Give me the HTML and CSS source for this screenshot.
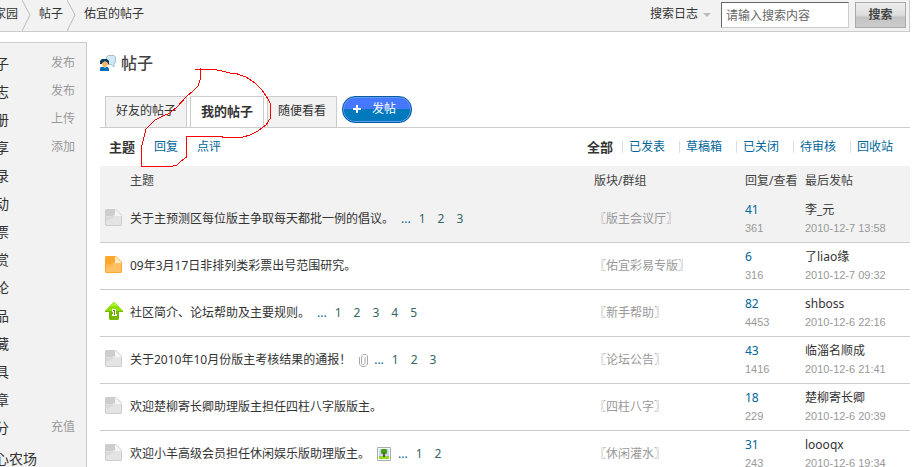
FILE: index.html
```html
<!DOCTYPE html>
<html lang="zh-CN">
<head>
  <meta charset="UTF-8">
  <meta name="viewport" content="width=device-width, initial-scale=1.0">
  <title>佑宜的帖子</title>
  <link rel="stylesheet" href="styles.css">
</head>
<body>

<svg class="defs" width="0" height="0" aria-hidden="true">
  <symbol id="arrow" viewBox="0 0 10 31">
    <path d="M0 0 L8 15 L0 31" fill="none" stroke="#bbb"/>
  </symbol>
  <symbol id="folder" viewBox="0 0 17 17">
    <path d="M1 0H11L17 6V16L16 17H1L0 16V1Z" fill="#cdcdcd"/>
    <path d="M1 7H7L9 6H16V16H1Z" fill="#e4e4e4"/>
    <path d="M1 8L8 7V9L1 12Z" fill="#dadada"/>
    <path d="M10 0L17 7H10Z" fill="#f5f5f5"/>
  </symbol>
  <symbol id="folder-new" viewBox="0 0 17 17">
    <path d="M1 0H11L17 6V16L16 17H1L0 16V1Z" fill="#ffa72e"/>
    <path d="M1 9L7 8L9 6H16V16H1Z" fill="#ffc164"/>
    <path d="M1 9L8 8V10L1 13Z" fill="#ffb850"/>
    <path d="M10 0L17 7H10Z" fill="#ffedcf"/>
  </symbol>
</svg>

<div class="header">
  <div class="crumbs">
    <a href="#">家园</a>
    <svg width="10" height="31"><use href="#arrow"/></svg>
    <a href="#">帖子</a>
    <svg width="10" height="31"><use href="#arrow"/></svg>
    <a href="#">佑宜的帖子</a>
  </div>
  <form class="search">
    <label class="search-type">
      <select aria-label="搜索类型">
        <option>搜索日志</option>
      </select>
      <svg width="8" height="4" viewBox="0 0 8 4"><path d="M0 0H8L4 4Z" fill="#bbb"/></svg>
    </label>
    <input type="text" placeholder="请输入搜索内容" aria-label="搜索内容">
    <button type="button">搜索</button>
  </form>
</div>

<div class="wrap">
  <ul class="sidebar">
    <li><a href="#">子</a><a class="act" href="#">发布</a></li>
    <li><a href="#">志</a><a class="act" href="#">发布</a></li>
    <li><a href="#">册</a><a class="act" href="#">上传</a></li>
    <li><a href="#">享</a><a class="act" href="#">添加</a></li>
    <li><a href="#">录</a></li>
    <li><a href="#">动</a></li>
    <li><a href="#">票</a></li>
    <li><a href="#">赏</a></li>
    <li><a href="#">论</a></li>
    <li><a href="#">品</a></li>
    <li><a href="#">藏</a></li>
    <li><a href="#">具</a></li>
    <li><a href="#">章</a></li>
    <li><a href="#">分</a><a class="act" href="#">充值</a></li>
    <li class="app"><a href="#">心农场</a></li>
  </ul>

  <div class="main">
    <h1>
      <svg width="16" height="16" viewBox="0 0 16 16">
        <path d="M6.500 2L8 0.500H14L15.500 2V7L14 9V12L11 9.500H8L6 7Z" fill="#cfe9f8" stroke="#a9bcc8"/>
        <path d="M2 4H7L9 6V9H0V6Z" fill="#0b3f63"/>
        <path d="M2 8L5 6L8 8V10L6 12H4L2 10Z" fill="#f8b56c"/>
        <path d="M1 12H4L5 13L6 12H8L9 14V16H0V13Z" fill="#0a6fb5"/>
      </svg>
      帖子
    </h1>

    <div class="tabs">
      <a href="#">好友的帖子</a>
      <a class="on" href="#">我的帖子</a>
      <a href="#">随便看看</a>
      <button type="button" class="post">
        <svg width="8" height="8" viewBox="0 0 8 8"><path d="M3 0H5V3H8V5H5V8H3V5H0V3H3Z" fill="#fff"/></svg>
        发帖
      </button>
    </div>

    <div class="subnav">
      <div class="kinds">
        <a class="on" href="#">主题</a>
        <a href="#">回复</a>
        <a href="#">点评</a>
      </div>
      <div class="filters">
        <a class="on" href="#">全部</a>
        <a href="#">已发表</a>
        <a href="#">草稿箱</a>
        <a href="#">已关闭</a>
        <a href="#">待审核</a>
        <a href="#">回收站</a>
      </div>
    </div>

    <table>
      <thead>
        <tr>
          <th class="icn"></th>
          <th>主题</th>
          <th class="forum">版块/群组</th>
          <th class="num">回复/查看</th>
          <th class="by">最后发帖</th>
        </tr>
      </thead>
      <tbody>
        <tr class="hover">
          <td class="icn"><svg width="17" height="17"><use href="#folder"/></svg></td>
          <td><div class="subject"><a href="#">关于主预测区每位版主争取每天都批一例的倡议。</a><span class="pages">...<a href="#">1</a><a href="#">2</a><a href="#">3</a></span></div></td>
          <td class="forum"><a href="#">〖版主会议厅〗</a></td>
          <td class="num"><a href="#">41</a><em>361</em></td>
          <td class="by"><a href="#">李_元</a><em>2010-12-7 13:58</em></td>
        </tr>
        <tr>
          <td class="icn"><svg width="17" height="17"><use href="#folder-new"/></svg></td>
          <td><div class="subject"><a href="#">09年3月17日非排列类彩票出号范围研究。</a></div></td>
          <td class="forum"><a href="#">〖佑宜彩易专版〗</a></td>
          <td class="num"><a href="#">6</a><em>316</em></td>
          <td class="by"><a href="#">了liao缘</a><em>2010-12-7 09:32</em></td>
        </tr>
        <tr>
          <td class="icn">
            <svg width="18" height="18" viewBox="0 0 18 18">
              <path d="M9 0L18 9V10H14V17L13 18H5L4 17V10H0V9Z" fill="#76b900"/>
              <path d="M9 0L18 9H0Z" fill="#8fe000"/>
              <path d="M9 0L13 4H5Z" fill="#a8f52a"/>
              <path d="M7 7H11V12H12V14H7V12H8V10H7Z" fill="#fff"/>
              <path d="M8 8H10V13H9V9H8Z" fill="#5c9600"/>
            </svg>
          </td>
          <td><div class="subject"><a href="#">社区简介、论坛帮助及主要规则。</a><span class="pages">...<a href="#">1</a><a href="#">2</a><a href="#">3</a><a href="#">4</a><a href="#">5</a></span></div></td>
          <td class="forum"><a href="#">〖新手帮助〗</a></td>
          <td class="num"><a href="#">82</a><em>4453</em></td>
          <td class="by"><a href="#">shboss</a><em>2010-12-6 22:16</em></td>
        </tr>
        <tr>
          <td class="icn"><svg width="17" height="17"><use href="#folder"/></svg></td>
          <td><div class="subject"><a href="#">关于2010年10月份版主考核结果的通报！</a><svg class="attach" width="9" height="13" viewBox="0 0 9 13"><path d="M2.500 3V9.500L3.500 10.500H5L6 9.500V3M0.500 3V10L2.500 12.500H6L8.500 10V2L7 0.500H4L3 1.500V3" fill="none" stroke="#aaa"/></svg><span class="pages">...<a href="#">1</a><a href="#">2</a><a href="#">3</a></span></div></td>
          <td class="forum"><a href="#">〖论坛公告〗</a></td>
          <td class="num"><a href="#">43</a><em>1416</em></td>
          <td class="by"><a href="#">临淄名顺成</a><em>2010-12-6 21:41</em></td>
        </tr>
        <tr>
          <td class="icn"><svg width="17" height="17"><use href="#folder"/></svg></td>
          <td><div class="subject"><a href="#">欢迎楚柳寄长卿助理版主担任四柱八字版版主。</a></div></td>
          <td class="forum"><a href="#">〖四柱八字〗</a></td>
          <td class="num"><a href="#">18</a><em>229</em></td>
          <td class="by"><a href="#">楚柳寄长卿</a><em>2010-12-6 20:39</em></td>
        </tr>
        <tr>
          <td class="icn"><svg width="17" height="17"><use href="#folder"/></svg></td>
          <td><div class="subject"><a href="#">欢迎小羊高级会员担任休闲娱乐版助理版主。</a><svg class="image" width="14" height="14" viewBox="0 0 14 14"><path d="M0.500 0.500H13.500V13.500H0.500Z" fill="#fff" stroke="#aaa"/><path d="M2 2H12V9H2Z" fill="#b9dcf8"/><path d="M2 9H12V12H2Z" fill="#8edb1c"/><path d="M5 2H9L10 3V6L9 7H5L4 6V3Z" fill="#4d9a0c"/><path d="M6 6H8V10H6Z" fill="#8a4b12"/></svg><span class="pages">...<a href="#">1</a><a href="#">2</a></span></div></td>
          <td class="forum"><a href="#">〖休闲灌水〗</a></td>
          <td class="num"><a href="#">31</a><em>243</em></td>
          <td class="by"><a href="#">loooqx</a><em>2010-12-6 19:34</em></td>
        </tr>
      </tbody>
    </table>
  </div>
</div>

<!-- hand-drawn marker round "我的帖子" and "回复" -->
<svg class="marker" width="132" height="100" viewBox="140 68 132 100">
  <path d="M195 69.500H215L222 71L230 73L236 73.500L246 77L255 83L262 90L268 99L270.500 104V118L266 125L258 131L250 135L243 137H222V136.500H190L186.500 137V157L180 162L177 165L171 166.500H142L141.500 147L144 137L146 129L155 120L163 116L170 113L177 107L186 97L193 91L198 86L200.500 79V68"/>
</svg>

</body>
</html>
```
FILE: styles.css
```css
body {
  margin: 0;
  font: 12px/18px "Noto Sans", "Noto Sans CJK SC", sans-serif;
  background: #fff;
  color: #333;
  overflow: hidden;
}

a {
  color: #333;
  text-decoration: none;
}

input, button, select {
  font: inherit;
}

.defs {
  position: absolute;
}

.header {
  display: flex;
  justify-content: space-between;
  height: 31px;
  margin-right: 2px;
  background: #f2f2f2;
  border-right: 1px solid #ccc;
  border-bottom: 1px solid #ccc;
}

.crumbs {
  display: flex;
  margin-left: -6px;
  line-height: 28px;
}

.crumbs svg {
  margin: 0 7px 0 4px;
}

.search {
  display: flex;
  align-items: flex-start;
  padding: 2px 3px 0 0;
}

.search-type {
  display: flex;
  align-items: center;
  gap: 4px;
  height: 24px;
  margin-right: 10px;
}

.search-type select {
  appearance: none;
  padding: 0;
  border: 0;
  background: none;
  color: #333;
}

.search-type svg {
  margin-top: 2px;
}

.search input {
  box-sizing: border-box;
  width: 128px;
  height: 26px;
  margin-right: 6px;
  padding: 0 4px;
  border: 1px solid;
  border-color: #666 #ccc #ccc #666;
  background: #fff;
}

.search input::placeholder {
  color: #666;
}

.search button {
  width: 51px;
  height: 26px;
  padding: 0;
  border: 1px solid #aaa;
  background: linear-gradient(#eee, #ddd 50%, #c4c4c4 60%, #ccc);
  color: #444;
  font-weight: bold;
  line-height: 22px;
}

.wrap {
  display: flex;
  align-items: flex-start;
  margin: 10px 2px 0 0;
}

/* sidebar */
.sidebar {
  flex: none;
  box-sizing: border-box;
  width: 87px;
  margin: 0 13px 0 0;
  padding: 7px 11px 10px 0;
  list-style: none;
  background: #f2f2f2;
  border: 1px solid #ccc;
  border-left: 0;
}

.sidebar li {
  display: flex;
  justify-content: space-between;
  height: 28px;
  margin-left: -5px;
  font-size: 14px;
  line-height: 28px;
}

.sidebar .act {
  color: #999;
  font-size: 12px;
  line-height: 26px;
}

.sidebar .app {
  margin-top: 3px;
}

.main {
  flex: 1;
  min-width: 0;
}

h1 {
  display: flex;
  align-items: center;
  gap: 5px;
  margin: 10px 0 0;
  color: #444;
  font-size: 16px;
  font-weight: 500;
  line-height: 22px;
}

/* tabs */
.tabs {
  display: flex;
  margin-top: 22px;
  padding-left: 5px;
  border-bottom: 1px solid #ccc;
}

.tabs a {
  height: 30px;
  margin-right: 3px;
  padding: 0 10px;
  border: 1px solid #ccc;
  border-bottom: 0;
  background: #f2f2f2;
  line-height: 28px;
}

.tabs .on {
  margin-bottom: -1px;
  padding: 0 10px;
  background: #fff;
  font-size: 13px;
  font-weight: bold;
}

.post {
  display: flex;
  align-items: center;
  gap: 11px;
  width: 70px;
  height: 27px;
  margin-left: 2px;
  padding: 0 0 2px 10px;
  border: 1px solid #0a5a9c;
  border-radius: 13px;
  background: linear-gradient(#4678ff 50%, #0079bd 50%);
  box-shadow: inset 0 0 0 1px #5c9cf5;
  color: #fff;
}

.subnav {
  display: flex;
  justify-content: space-between;
  padding: 10px 4px 10px 9px;
}

.subnav a {
  color: #069;
}

.subnav .on {
  color: #333;
  font-size: 13px;
  font-weight: bold;
}

.kinds {
  display: flex;
  gap: 19px;
}

.filters {
  display: flex;
}

.filters a {
  padding: 0 13px 0 7px;
  background: linear-gradient(#ddd, #ddd) left center / 1px 12px no-repeat;
  border-left: 1px solid transparent;
}

.filters .on {
  padding: 0 8px 0 0;
  background: none;
}

/* thread list */
table {
  width: 100%;
  border-collapse: collapse;
  table-layout: fixed;
}

th, td {
  padding: 0;
  text-align: left;
  font-weight: normal;
}

th {
  height: 30px;
  background: #f2f2f2;
  color: #444;
}

td {
  height: 46px;
  border-bottom: 1px solid #ccc;
}

.hover td {
  background: #f2f2f2;
}

.icn {
  width: 30px;
}

.icn svg {
  display: block;
  margin: 0 0 4px 5px;
}

.forum {
  width: 151px;
}

.num {
  width: 60px;
  white-space: nowrap;
}

.by {
  width: 105px;
  white-space: nowrap;
}

.subject {
  display: flex;
  align-items: center;
}

td.forum a {
  color: #999;
}

td.num a {
  color: #069;
}

td em {
  display: block;
  color: #999;
  font: 11px/18px "Liberation Sans", sans-serif;
}

.pages {
  display: flex;
  gap: 12px;
  margin-left: 7px;
  color: #069;
}

.pages a {
  color: #366;
}

.pages a:first-child {
  margin-left: -4px;
}

.attach {
  margin-left: 8px;
}

.attach + .pages {
  margin-left: 6px;
}

.image {
  margin-left: 7px;
}

.marker {
  position: absolute;
  top: 68px;
  left: 140px;
  fill: none;
  stroke: #f00;
  shape-rendering: crispEdges;
  pointer-events: none;
}
```
